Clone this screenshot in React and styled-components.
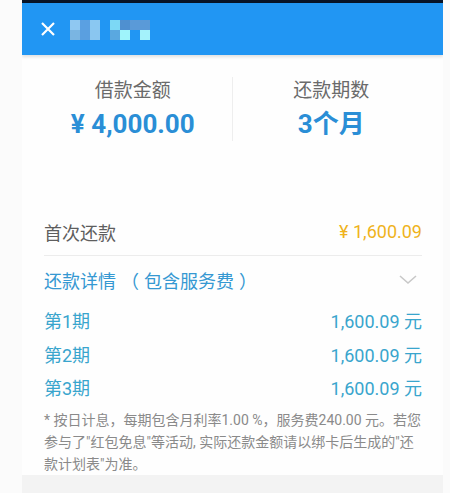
import React from 'react';
import styled, { createGlobalStyle } from 'styled-components';

const GlobalStyle = createGlobalStyle`
  body {
    margin: 0;
    background: #fbfbfb;
    font-family: "Roboto", "Noto Sans CJK SC", sans-serif;
  }
`;

const Screen = styled.div`
  margin-left: 22px;
  width: 421px;
  height: 493px;
  background: #fefefe;
  display: flex;
  flex-direction: column;
  overflow: hidden;
`;

const StatusStrip = styled.div`
  height: 3px;
  background: #071428;
`;

const Header = styled.header`
  height: 52px;
  background: #2196f3;
  display: flex;
  align-items: center;
  padding-left: 18px;
  gap: 14px;
  box-shadow: 0 2px 3px rgba(0, 0, 0, 0.12);
`;

const Mosaic = styled.div`
  display: grid;
  grid-template-columns: repeat(8, 10px);
  grid-template-rows: repeat(2, 10px);
  margin-top: 2px;
`;

const Cell = styled.div`
  background: ${p => p.$c};
`;

const Summary = styled.section`
  display: flex;
  align-items: center;
  padding: 22px 13px 0 12px;
`;

const SummaryCol = styled.div`
  flex: 1;
  display: flex;
  flex-direction: column;
  align-items: center;
  gap: 2px;
`;

const VDivider = styled.div`
  width: 1px;
  height: 64px;
  background: #eeeeee;
`;

const SummaryLabel = styled.div`
  font-size: 19px;
  color: #6a6a6a;
  line-height: 28px;
`;

const SummaryValue = styled.div`
  font-size: 26px;
  font-weight: 700;
  color: #2a8ed6;
  line-height: 34px;
`;

const Body = styled.section`
  padding: 0 21px 0 22px;
  margin-top: 68px;
`;

const Row = styled.div`
  display: flex;
  align-items: center;
  justify-content: space-between;
  height: ${p => p.$h || 34}px;
  font-size: 18px;
  border-bottom: ${p => (p.$line ? '1px solid #ececec' : 'none')};
`;

const Label = styled.span`
  color: ${p => p.$c || '#5e5e5e'};
`;

const Paren = styled.span`
  margin: 0 5px;
`;

const Value = styled.span`
  color: ${p => p.$c};
`;

const Chevron = styled.svg`
  width: 20px;
  height: 12px;
  margin-right: 4px;
`;

const Note = styled.p`
  margin: 5px 0 0;
  font-size: 14px;
  line-height: 22px;
  color: #8a8a8a;
`;

const Footer = styled.div`
  margin-top: auto;
  height: 18px;
  background: #f3f3f3;
`;

const mosaic = [
  '#8fc8f2', '#5aa0e2', '#8ac8f2', '#2196f3', '#7cd8f5', '#4f90d0', '#5a9ad8', '#5a9ad8',
  '#7ab5e2', '#5a9fe0', '#8ac6f0', '#2196f3', '#5aa8e0', '#9ff4fb', '#2196f3', '#a4f2fb',
];

const periods = ['第1期', '第2期', '第3期'];

export default function App() {
  return (
    <>
      <GlobalStyle />
      <Screen>
        <StatusStrip />
        <Header>
          <svg width="16" height="16" viewBox="0 0 16 16">
            <path d="M2 2L14 14M14 2L2 14" stroke="#fff" strokeWidth="2.2" />
          </svg>
          <Mosaic>
            {mosaic.map((c, i) => (
              <Cell key={i} $c={c} />
            ))}
          </Mosaic>
        </Header>
        <Summary>
          <SummaryCol>
            <SummaryLabel>借款金额</SummaryLabel>
            <SummaryValue>¥ 4,000.00</SummaryValue>
          </SummaryCol>
          <VDivider />
          <SummaryCol>
            <SummaryLabel>还款期数</SummaryLabel>
            <SummaryValue>3个月</SummaryValue>
          </SummaryCol>
        </Summary>
        <Body>
          <Row $h={46} $line>
            <Label>首次还款</Label>
            <Value $c="#efb31c">¥ 1,600.09</Value>
          </Row>
          <Row $h={48}>
            <Label $c="#3598d2">
              还款详情<Paren>（</Paren>包含服务费<Paren>）</Paren>
            </Label>
            <Chevron viewBox="0 0 20 12">
              <path d="M2 2L10 9L18 2" fill="none" stroke="#c8c8c8" strokeWidth="1.6" />
            </Chevron>
          </Row>
          {periods.map(p => (
            <Row key={p} $h={33.5}>
              <Label $c="#39a5cd">{p}</Label>
              <Value $c="#39a5cd">1,600.09 元</Value>
            </Row>
          ))}
          <Note>
            * 按日计息，每期包含月利率1.00 %，服务费240.00 元。若您参与了"红包免息"等活动, 实际还款金额请以绑卡后生成的"还款计划表"为准。
          </Note>
        </Body>
        <Footer />
      </Screen>
    </>
  );
}
